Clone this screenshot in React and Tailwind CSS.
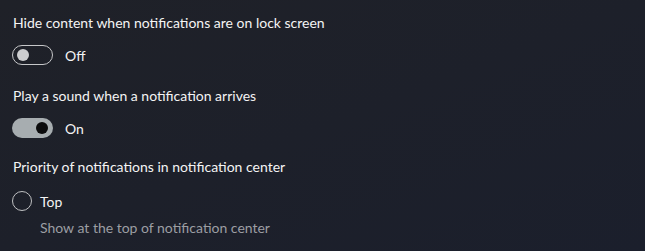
export default function App() {
  const font = { fontFamily: 'Lato, "Noto Sans", sans-serif' };
  return (
    <div
      className="w-[645px] h-[251px] overflow-hidden bg-gradient-to-br from-[#1f2128] to-[#1b1f2c] text-white pl-[13px] pt-[13px]"
      style={font}
    >
      <div className="text-[14px] leading-[20px] text-[#f4f4f4]">Hide content when notifications are on lock screen</div>
      <div className="mt-[12px] flex items-center h-[20px] -ml-[1px]">
        <div className="w-[41px] h-[20px] rounded-full border border-[#c6c7c9] flex items-center px-[4px]">
          <div className="w-[12px] h-[12px] rounded-full bg-[#cdced0]" />
        </div>
        <span className="ml-[12px] text-[14px] text-[#f4f4f4]">Off</span>
      </div>
      <div className="mt-[21px] text-[14px] leading-[20px] text-[#f4f4f4]">Play a sound when a notification arrives</div>
      <div className="mt-[12px] flex items-center h-[20px] -ml-[1px]">
        <div className="w-[41px] h-[20px] rounded-full bg-[#a7adb0] flex items-center justify-end px-[5px]">
          <div className="w-[12px] h-[12px] rounded-full bg-[#0b0b0c]" />
        </div>
        <span className="ml-[12px] text-[14px] text-[#f4f4f4]">On</span>
      </div>
      <div className="mt-[19px] text-[14px] leading-[20px] text-[#f4f4f4]">Priority of notifications in notification center</div>
      <div className="mt-[14px] flex items-center h-[20px] -ml-[1px]">
        <div className="w-[20px] h-[20px] rounded-full border border-[#bfc0c2]" />
        <span className="ml-[8px] text-[14px] text-[#f4f4f4]">Top</span>
      </div>
      <div className="mt-[7px] ml-[27px] text-[14px] leading-[20px] text-[#9c9ea3]">Show at the top of notification center</div>
    </div>
  );
}
